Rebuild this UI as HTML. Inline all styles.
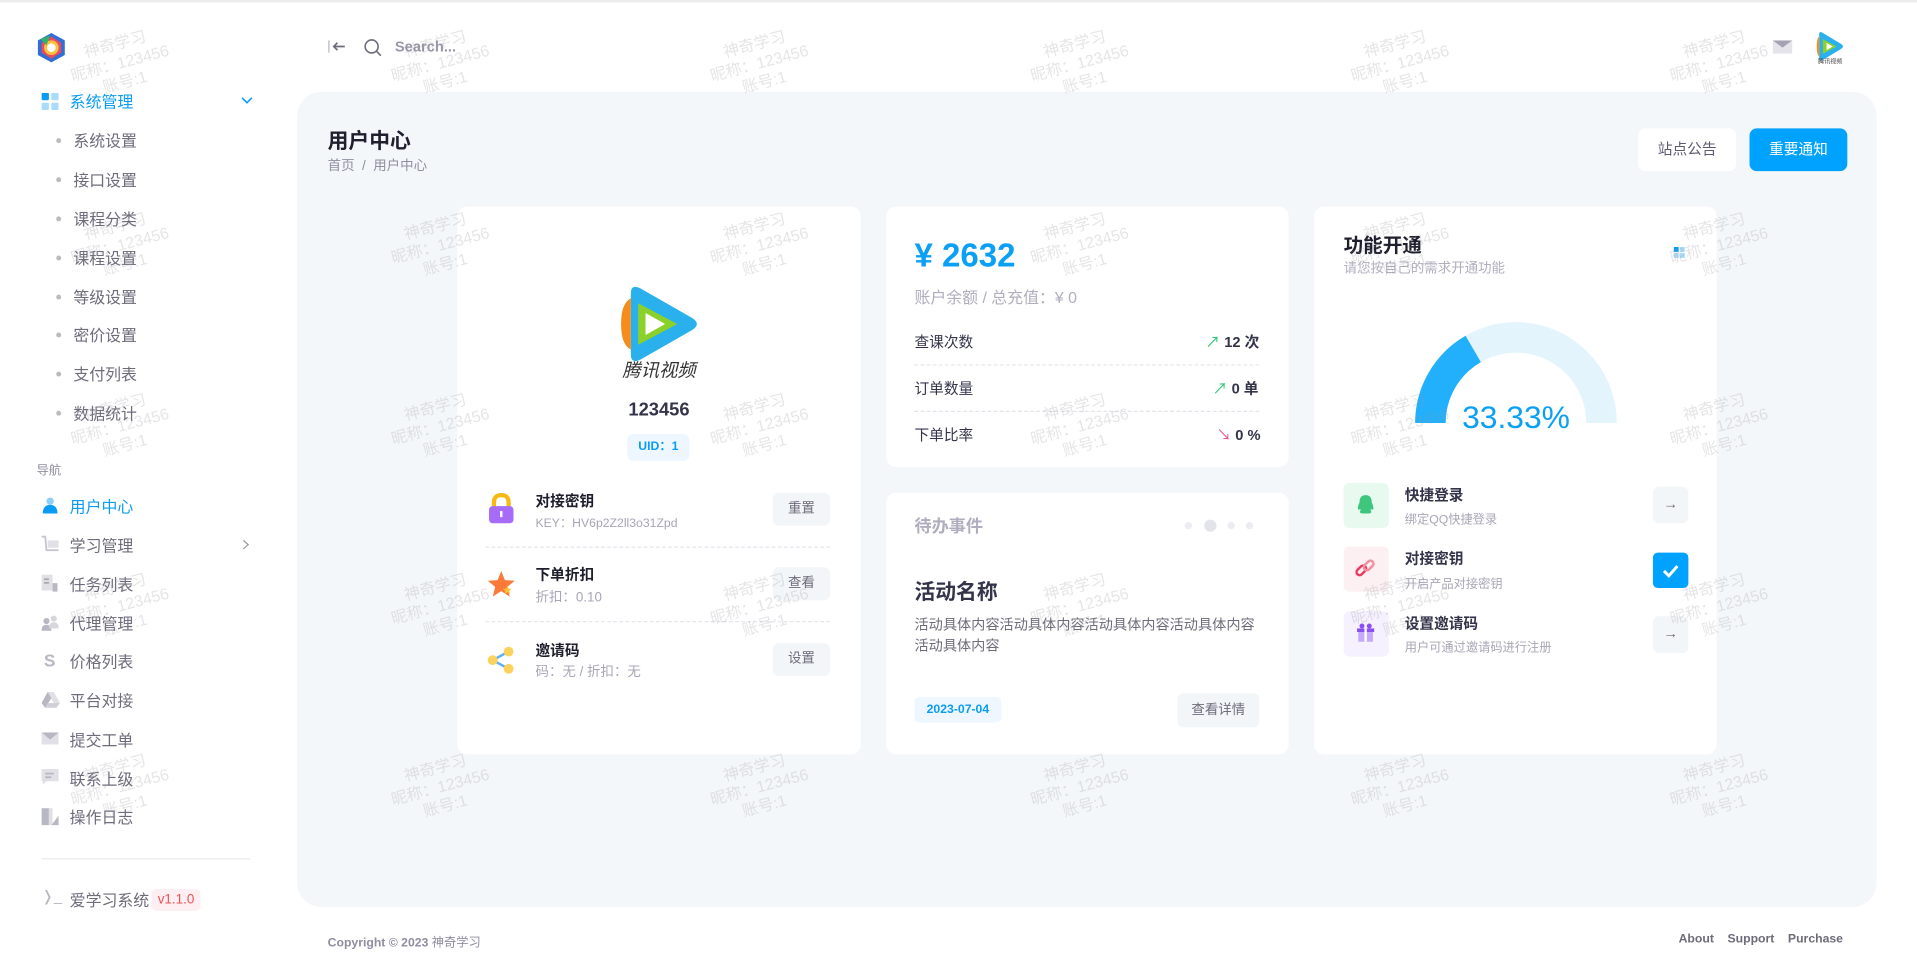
<!DOCTYPE html>
<html><head><meta charset="utf-8">
<style>
*{box-sizing:border-box;margin:0;padding:0}
html,body{width:1917px;height:960px;overflow:hidden;background:#fff}
body{font-family:"Liberation Sans","Noto Sans CJK SC",sans-serif;color:#5e5873}
#w{position:absolute;left:0;top:0;width:1568px;height:785px;transform:scale(1.22258);transform-origin:0 0;background:#fff}
.a{position:absolute;white-space:nowrap}
.card{position:absolute;background:#fff;border-radius:8px}
.sub{font-size:13px;color:#6e6b7b}
.dot{position:absolute;width:4px;height:4px;border-radius:50%;background:#bbb}
.btn{position:absolute;background:#f3f6f9;border-radius:5px;font-size:11px;color:#6e6b7b;text-align:center}
.dash{position:absolute;border-top:1px dashed #e3e3ec;height:0}
.wm{position:absolute;color:rgba(150,150,160,.25);font-size:13px;text-align:center;line-height:16px;transform:rotate(-15deg);white-space:nowrap;pointer-events:none}
</style></head><body><div id="w">
<div class="a" style="left:0;top:0;width:1568px;height:2px;background:#ececec"></div>

<svg class="a" style="left:29px;top:26px" width="26" height="26" viewBox="0 0 26 26"><polygon points="13,1 24,7 24,19 13,25 2,19 2,7" fill="#2f6fd6"/><polygon points="13,4 21,9 21,17 13,22 5,17 5,9" fill="#e84a5f"/><circle cx="13" cy="13" r="6" fill="#f9c23c"/><circle cx="13" cy="13" r="3.5" fill="#fff"/><path d="M4 6 L12 3 L9 11Z" fill="#31b26b"/></svg>

<svg class="a" style="left:34px;top:76px" width="14" height="14"><rect x="0" y="0" width="6" height="6" rx="1" fill="#0a9cf5"/><rect x="8" y="0" width="6" height="6" rx="1" fill="#a9dbfb"/><rect x="0" y="8" width="6" height="6" rx="1" fill="#a9dbfb"/><rect x="8" y="8" width="6" height="6" rx="1" fill="#a9dbfb"/></svg>
<div class="a" style="left:57px;top:73px;font-size:13px;color:#0a9cf5">系统管理</div>
<svg class="a" style="left:197px;top:78px" width="10" height="8"><path d="M1 2 L5 6 L9 2" stroke="#0a9cf5" fill="none" stroke-width="1.3"/></svg>

<div class="dot" style="left:46px;top:113px"></div><div class="a sub" style="left:60px;top:105px">系统设置</div>
<div class="dot" style="left:46px;top:145px"></div><div class="a sub" style="left:60px;top:137px">接口设置</div>
<div class="dot" style="left:46px;top:177px"></div><div class="a sub" style="left:60px;top:169px">课程分类</div>
<div class="dot" style="left:46px;top:209px"></div><div class="a sub" style="left:60px;top:201px">课程设置</div>
<div class="dot" style="left:46px;top:241px"></div><div class="a sub" style="left:60px;top:233px">等级设置</div>
<div class="dot" style="left:46px;top:272px"></div><div class="a sub" style="left:60px;top:264px">密价设置</div>
<div class="dot" style="left:46px;top:304px"></div><div class="a sub" style="left:60px;top:296px">支付列表</div>
<div class="dot" style="left:46px;top:336px"></div><div class="a sub" style="left:60px;top:328px">数据统计</div>

<div class="a" style="left:30px;top:376px;font-size:10px;color:#8f8da0">导航</div>

<svg class="a" style="left:34px;top:406px" width="14" height="14"><circle cx="7" cy="4" r="3" fill="#8ccff9"/><path d="M1 14 Q1 7 7 7 Q13 7 13 14Z" fill="#0a9cf5"/></svg>
<div class="a" style="left:57px;top:404px;font-size:13px;color:#0a9cf5">用户中心</div>

<svg class="a" style="left:34px;top:438px" width="14" height="14"><path d="M0 1 L3 1 L4 12 L14 12" stroke="#c6c6cf" fill="none" stroke-width="1.5"/><rect x="5" y="4" width="9" height="6" fill="#e0e0e6"/></svg>
<div class="a sub" style="left:57px;top:436px">学习管理</div>
<svg class="a" style="left:198px;top:441px" width="6" height="9"><path d="M1 1 L5 4.5 L1 8" stroke="#999" fill="none"/></svg>

<svg class="a" style="left:34px;top:470px" width="14" height="14"><rect x="0" y="0" width="9" height="13" fill="#e0e0e6"/><rect x="9" y="7" width="4" height="7" fill="#b8b8c2"/><rect x="2" y="3" width="4" height="1.5" fill="#aaa"/><rect x="2" y="6" width="4" height="1.5" fill="#aaa"/></svg>
<div class="a sub" style="left:57px;top:468px">任务列表</div>

<svg class="a" style="left:34px;top:502px" width="14" height="14"><circle cx="4" cy="6" r="2.5" fill="#b8b8c2"/><circle cx="10" cy="4" r="2.5" fill="#d6d6dd"/><path d="M0 14 Q0 9 4 9 Q8 9 8 14Z" fill="#b8b8c2"/><path d="M6 12 Q6 7 10 7 Q14 7 14 12Z" fill="#d6d6dd"/></svg>
<div class="a sub" style="left:57px;top:500px">代理管理</div>

<div class="a" style="left:36px;top:532px;font-size:14px;color:#b8b8c2;font-weight:bold">S</div>
<div class="a sub" style="left:57px;top:531px">价格列表</div>

<svg class="a" style="left:34px;top:566px" width="15" height="13"><path d="M5 0 L10 0 L15 9 L12 13Z" fill="#e0e0e6"/><path d="M5 0 L0 9 L3 13 L8 5Z" fill="#b8b8c2"/><path d="M3 13 L12 13 L15 9 L5 9Z" fill="#d0d0d8"/></svg>
<div class="a sub" style="left:57px;top:563px">平台对接</div>

<svg class="a" style="left:34px;top:599px" width="14" height="10"><rect width="14" height="10" fill="#e0e0e6"/><path d="M0 0 L7 6 L14 0Z" fill="#b8b8c2"/></svg>
<div class="a sub" style="left:57px;top:595px">提交工单</div>

<svg class="a" style="left:34px;top:629px" width="14" height="14"><path d="M0 0 H14 V10 H4 L1 13 V10 H0Z" fill="#e0e0e6"/><rect x="3" y="3" width="7" height="1.5" fill="#b8b8c2"/><rect x="3" y="6" width="5" height="1.5" fill="#b8b8c2"/></svg>
<div class="a sub" style="left:57px;top:627px">联系上级</div>

<svg class="a" style="left:34px;top:661px" width="14" height="14"><rect x="0" y="0" width="6" height="14" fill="#b8b8c2"/><rect x="6" y="0" width="3" height="14" fill="#e0e0e6"/><path d="M8 14 L14 6 L14 14Z" fill="#b8b8c2"/></svg>
<div class="a sub" style="left:57px;top:658px">操作日志</div>

<div class="a" style="left:34px;top:702px;width:171px;height:1px;background:#ebe9f1"></div>
<div class="a" style="left:34px;top:726px;font-size:12px;color:#b8b8c2">&#x276D;_</div>
<div class="a sub" style="left:57px;top:726px">爱学习系统</div>
<div class="a" style="left:124px;top:727px;padding:2px 5px;background:#fdeef1;color:#ea5455;font-size:11px;border-radius:4px;line-height:14px">v1.1.0</div>

<svg class="a" style="left:268px;top:32px" width="16" height="12"><line x1="1" y1="1" x2="1" y2="11" stroke="#c6c6cf" stroke-width="1.3"/><path d="M14 6 H5 M8 3 L5 6 L8 9" stroke="#6e6b7b" fill="none" stroke-width="1.4"/></svg>
<svg class="a" style="left:297px;top:31px" width="16" height="16"><circle cx="7" cy="7" r="5.3" stroke="#6e6b7b" fill="none" stroke-width="1.3"/><line x1="11" y1="11" x2="14.5" y2="14.5" stroke="#6e6b7b" stroke-width="1.3"/></svg>
<div class="a" style="left:323px;top:31px;font-size:12px;color:#9896a8;font-weight:bold">Search...</div>
<svg class="a" style="left:1450px;top:33px" width="16" height="11"><rect width="16" height="11" fill="#e4e4ea"/><path d="M0 0 L8 6 L16 0Z" fill="#a5a3b3"/></svg>
<svg class="a" style="left:1484px;top:25px" width="26" height="28" viewBox="0 0 26 28"><path d="M4 3 Q4 0 7 2 L22 11 Q25 13 22 15 L7 24 Q4 26 4 23Z" fill="#2bb0ee"/><path d="M4 5 L4 21 Q2 20 2 13 Q2 6 4 5Z" fill="#f58c1c"/><path d="M7 7 L18 13 L7 19Z" fill="#8cd12a"/><path d="M10 10 L15 13 L10 16Z" fill="#fff"/><text x="13" y="27" font-size="5" text-anchor="middle" fill="#444" font-family="Noto Sans CJK SC,sans-serif">腾讯视频</text></svg>

<div class="a" style="left:243px;top:75px;width:1292px;height:667px;background:#f4f7fa;border-radius:20px"></div>
<div class="a" style="left:268px;top:101px;font-size:17px;font-weight:bold;color:#1e1e2d">用户中心</div>
<div class="a" style="left:268px;top:127px;font-size:11px;color:#8f8da0">首页 &nbsp;/&nbsp; 用户中心</div>
<div class="a" style="left:1340px;top:105px;width:80px;height:35px;background:#fff;border-radius:6px;font-size:12px;color:#5e5873;text-align:center;line-height:35px">站点公告</div>
<div class="a" style="left:1431px;top:105px;width:80px;height:35px;background:#00a2ff;border-radius:6px;font-size:12px;color:#fff;text-align:center;line-height:35px">重要通知</div>

<div class="card" style="left:374px;top:169px;width:330px;height:448px"></div>
<svg class="a" style="left:504px;top:232px" width="70" height="80" viewBox="0 0 70 80"><path d="M12 8 Q12 0 20 4 L62 28 Q70 33 62 38 L20 62 Q12 66 12 58Z" fill="#2bb0ee"/><path d="M12 12 L12 54 Q4 50 4 33 Q4 16 12 12Z" fill="#f58c1c"/><path d="M18 16 L50 33 L18 50Z" fill="#8cd12a"/><path d="M24 24 L40 33 L24 42Z" fill="#fff"/><text x="35" y="76" font-size="15" text-anchor="middle" fill="#333" font-style="italic" font-family="Noto Sans CJK SC,sans-serif">腾讯视频</text></svg>
<div class="a" style="left:504px;top:327px;width:70px;text-align:center;font-size:15px;font-weight:bold;color:#33334a">123456</div>
<div class="a" style="left:513px;top:355px;width:51px;height:22px;background:#eef7ff;border-radius:5px;color:#0a9cf5;font-size:10px;text-align:center;line-height:22px;font-weight:bold">UID：1</div>

<svg class="a" style="left:398px;top:403px" width="24" height="26"><path d="M6 12 V8 Q6 2 12 2 Q18 2 18 8 V12" stroke="#f9b815" stroke-width="3.5" fill="none"/><rect x="2" y="11" width="20" height="14" rx="3" fill="#a66cf7"/><rect x="11" y="15" width="2" height="5" fill="#fff"/></svg>
<div class="a" style="left:438px;top:401px;font-size:12px;font-weight:bold;color:#1e1e2d">对接密钥</div>
<div class="a" style="left:438px;top:419px;font-size:10px;color:#a8a6b6">KEY：HV6p2Z2ll3o31Zpd</div>
<div class="btn" style="left:632px;top:403px;width:47px;height:27px;line-height:27px">重置</div>
<div class="dash" style="left:397px;top:447px;width:282px"></div>

<svg class="a" style="left:398px;top:466px" width="24" height="24"><path d="M12 1 L15 8.5 L23 9 L17 14 L19 22 L12 17.5 L5 22 L7 14 L1 9 L9 8.5Z" fill="#fb7a3a"/><path d="M17 13 L18 15.5 L20.5 15.7 L18.6 17.3 L19.2 19.8 L17 18.4 L14.8 19.8 L15.4 17.3 L13.5 15.7 L16 15.5Z" fill="#fbc43a"/></svg>
<div class="a" style="left:438px;top:461px;font-size:12px;font-weight:bold;color:#1e1e2d">下单折扣</div>
<div class="a" style="left:438px;top:480px;font-size:11px;color:#a8a6b6">折扣：0.10</div>
<div class="btn" style="left:632px;top:464px;width:47px;height:27px;line-height:27px">查看</div>
<div class="dash" style="left:397px;top:508px;width:282px"></div>

<svg class="a" style="left:398px;top:528px" width="24" height="24"><line x1="5" y1="12" x2="18" y2="5" stroke="#5ab1f5" stroke-width="2"/><line x1="5" y1="12" x2="18" y2="19" stroke="#5ab1f5" stroke-width="2"/><circle cx="5" cy="12" r="4" fill="#fbd35c"/><circle cx="18" cy="5" r="4" fill="#fbd35c"/><circle cx="18" cy="19" r="4" fill="#fbd35c"/></svg>
<div class="a" style="left:438px;top:523px;font-size:12px;font-weight:bold;color:#1e1e2d">邀请码</div>
<div class="a" style="left:438px;top:541px;font-size:11px;color:#a8a6b6">码：无 / 折扣：无</div>
<div class="btn" style="left:632px;top:526px;width:47px;height:27px;line-height:27px">设置</div>

<div class="card" style="left:725px;top:169px;width:329px;height:213px"></div>
<div class="a" style="left:748px;top:194px;font-size:27px;font-weight:bold;color:#0aa0f5">¥ 2632</div>
<div class="a" style="left:748px;top:233px;font-size:13px;color:#b0aebe">账户余额 / 总充值：¥ 0</div>
<div class="a" style="left:748px;top:271px;font-size:12px;color:#33334a">查课次数</div>
<div class="a" style="left:986px;top:271px;font-size:12px;color:#33334a;font-weight:bold"><span style="color:#28c76f;font-weight:normal">&#x2197;</span> 12 次</div>
<div class="dash" style="left:748px;top:298px;width:282px"></div>
<div class="a" style="left:748px;top:309px;font-size:12px;color:#33334a">订单数量</div>
<div class="a" style="left:992px;top:309px;font-size:12px;color:#33334a;font-weight:bold"><span style="color:#28c76f;font-weight:normal">&#x2197;</span> 0 单</div>
<div class="dash" style="left:748px;top:336px;width:282px"></div>
<div class="a" style="left:748px;top:347px;font-size:12px;color:#33334a">下单比率</div>
<div class="a" style="left:995px;top:347px;font-size:12px;color:#33334a;font-weight:bold"><span style="color:#ea5485;font-weight:normal">&#x2198;</span> 0 %</div>

<div class="card" style="left:725px;top:403px;width:329px;height:214px"></div>
<div class="a" style="left:748px;top:420px;font-size:14px;color:#b0aebe;font-weight:bold">待办事件</div>
<div class="a" style="left:969px;top:427px;width:6px;height:6px;border-radius:50%;background:#ececf2"></div>
<div class="a" style="left:985px;top:425px;width:10px;height:10px;border-radius:50%;background:#e3e3ea"></div>
<div class="a" style="left:1004px;top:427px;width:6px;height:6px;border-radius:50%;background:#ececf2"></div>
<div class="a" style="left:1019px;top:427px;width:6px;height:6px;border-radius:50%;background:#ececf2"></div>
<div class="a" style="left:748px;top:470px;font-size:17px;font-weight:bold;color:#33334a">活动名称</div>
<div class="a" style="left:748px;top:503px;font-size:11.6px;color:#6e6b7b;line-height:17px">活动具体内容活动具体内容活动具体内容活动具体内容<br>活动具体内容</div>
<div class="a" style="left:748px;top:570px;width:71px;height:21px;background:#eef7ff;border-radius:4px;color:#0a9cf5;font-size:10px;font-weight:bold;text-align:center;line-height:21px">2023-07-04</div>
<div class="btn" style="left:963px;top:567px;width:67px;height:28px;line-height:28px">查看详情</div>

<div class="card" style="left:1075px;top:169px;width:329px;height:448px"></div>
<div class="a" style="left:1099px;top:187px;font-size:16px;font-weight:bold;color:#1e1e2d">功能开通</div>
<div class="a" style="left:1099px;top:211px;font-size:11px;color:#b0aebe">请您按自己的需求开通功能</div>
<svg class="a" style="left:1369px;top:202px" width="10" height="10"><rect x="0" y="0" width="4" height="4" fill="#0a9cf5"/><rect x="5" y="0" width="4" height="4" fill="#a9dbfb"/><rect x="0" y="5" width="4" height="4" fill="#a9dbfb"/><rect x="5" y="5" width="4" height="4" fill="#a9dbfb"/></svg>
<svg class="a" style="left:1150px;top:256px" width="180" height="92"><path d="M20 90 A70 70 0 0 1 160 90" stroke="#e3f4fd" stroke-width="25" fill="none"/><path d="M20 90 A70 70 0 0 1 55 29.4" stroke="#22b0fc" stroke-width="25" fill="none"/></svg>
<div class="a" style="left:1160px;top:326px;width:160px;text-align:center;font-size:26px;color:#0aa0f5">33.33%</div>

<div class="a" style="left:1099px;top:395px;width:37px;height:37px;border-radius:5px;background:#e8faf0"></div>
<svg class="a" style="left:1109px;top:404px" width="16" height="17"><path d="M8 1 Q3 1 3 7 Q1 11 2 13 Q4 12 4 13 Q2 16 6 16 H10 Q14 16 12 13 Q12 12 14 13 Q15 11 13 7 Q13 1 8 1Z" fill="#3fc67d"/></svg>
<div class="a" style="left:1149px;top:396px;font-size:12px;font-weight:bold;color:#33334a">快捷登录</div>
<div class="a" style="left:1149px;top:416px;font-size:10px;color:#a8a6b6">绑定QQ快捷登录</div>
<div class="btn" style="left:1352px;top:398px;width:29px;height:30px;line-height:29px;font-size:12px">&#x2192;</div>

<div class="a" style="left:1099px;top:447px;width:37px;height:37px;border-radius:5px;background:#fdf0f3"></div>
<svg class="a" style="left:1108px;top:456px" width="18" height="18"><rect x="1" y="8" width="9" height="5" rx="2.5" transform="rotate(-45 5.5 10.5)" stroke="#ea3b5c" stroke-width="2" fill="none"/><rect x="7" y="4" width="9" height="5" rx="2.5" transform="rotate(-45 11.5 6.5)" stroke="#f28ea0" stroke-width="2" fill="none"/></svg>
<div class="a" style="left:1149px;top:448px;font-size:12px;font-weight:bold;color:#33334a">对接密钥</div>
<div class="a" style="left:1149px;top:469px;font-size:10px;color:#a8a6b6">开启产品对接密钥</div>
<div class="a" style="left:1352px;top:452px;width:29px;height:29px;border-radius:4px;background:#00a2ff"></div>
<svg class="a" style="left:1359px;top:459px" width="15" height="15"><path d="M2 8 L6 12 L13 4" stroke="#fff" stroke-width="2.4" fill="none"/></svg>

<div class="a" style="left:1099px;top:500px;width:37px;height:37px;border-radius:5px;background:#f5f1fe"></div>
<svg class="a" style="left:1109px;top:509px" width="16" height="16"><rect x="1" y="5" width="14" height="3" fill="#8a4ff5"/><rect x="2" y="8" width="12" height="8" fill="#c6a9fb"/><rect x="7" y="5" width="2" height="11" fill="#fff"/><circle cx="5" cy="3" r="2" fill="#8a4ff5"/><circle cx="11" cy="3" r="2" fill="#8a4ff5"/></svg>
<div class="a" style="left:1149px;top:501px;font-size:12px;font-weight:bold;color:#33334a">设置邀请码</div>
<div class="a" style="left:1149px;top:521px;font-size:10px;color:#a8a6b6">用户可通过邀请码进行注册</div>
<div class="btn" style="left:1352px;top:504px;width:29px;height:30px;line-height:29px;font-size:12px">&#x2192;</div>

<div class="a" style="left:268px;top:762px;font-size:10px;color:#8f8da0;font-weight:bold">Copyright © 2023 <span style="font-weight:normal">神奇学习</span></div>
<div class="a" style="left:1373px;top:763px;font-size:10px;color:#6e6b7b;font-weight:bold">About &nbsp;&nbsp; Support &nbsp;&nbsp; Purchase</div>

<div class="wm" style="left:57px;top:28px">神奇学习<br>昵称：123456<br>账号:1</div>
<div class="wm" style="left:319px;top:28px">神奇学习<br>昵称：123456<br>账号:1</div>
<div class="wm" style="left:580px;top:28px">神奇学习<br>昵称：123456<br>账号:1</div>
<div class="wm" style="left:842px;top:28px">神奇学习<br>昵称：123456<br>账号:1</div>
<div class="wm" style="left:1104px;top:28px">神奇学习<br>昵称：123456<br>账号:1</div>
<div class="wm" style="left:1365px;top:28px">神奇学习<br>昵称：123456<br>账号:1</div>
<div class="wm" style="left:57px;top:177px">神奇学习<br>昵称：123456<br>账号:1</div>
<div class="wm" style="left:319px;top:177px">神奇学习<br>昵称：123456<br>账号:1</div>
<div class="wm" style="left:580px;top:177px">神奇学习<br>昵称：123456<br>账号:1</div>
<div class="wm" style="left:842px;top:177px">神奇学习<br>昵称：123456<br>账号:1</div>
<div class="wm" style="left:1104px;top:177px">神奇学习<br>昵称：123456<br>账号:1</div>
<div class="wm" style="left:1365px;top:177px">神奇学习<br>昵称：123456<br>账号:1</div>
<div class="wm" style="left:57px;top:325px">神奇学习<br>昵称：123456<br>账号:1</div>
<div class="wm" style="left:319px;top:325px">神奇学习<br>昵称：123456<br>账号:1</div>
<div class="wm" style="left:580px;top:325px">神奇学习<br>昵称：123456<br>账号:1</div>
<div class="wm" style="left:842px;top:325px">神奇学习<br>昵称：123456<br>账号:1</div>
<div class="wm" style="left:1104px;top:325px">神奇学习<br>昵称：123456<br>账号:1</div>
<div class="wm" style="left:1365px;top:325px">神奇学习<br>昵称：123456<br>账号:1</div>
<div class="wm" style="left:57px;top:472px">神奇学习<br>昵称：123456<br>账号:1</div>
<div class="wm" style="left:319px;top:472px">神奇学习<br>昵称：123456<br>账号:1</div>
<div class="wm" style="left:580px;top:472px">神奇学习<br>昵称：123456<br>账号:1</div>
<div class="wm" style="left:842px;top:472px">神奇学习<br>昵称：123456<br>账号:1</div>
<div class="wm" style="left:1104px;top:472px">神奇学习<br>昵称：123456<br>账号:1</div>
<div class="wm" style="left:1365px;top:472px">神奇学习<br>昵称：123456<br>账号:1</div>
<div class="wm" style="left:57px;top:620px">神奇学习<br>昵称：123456<br>账号:1</div>
<div class="wm" style="left:319px;top:620px">神奇学习<br>昵称：123456<br>账号:1</div>
<div class="wm" style="left:580px;top:620px">神奇学习<br>昵称：123456<br>账号:1</div>
<div class="wm" style="left:842px;top:620px">神奇学习<br>昵称：123456<br>账号:1</div>
<div class="wm" style="left:1104px;top:620px">神奇学习<br>昵称：123456<br>账号:1</div>
<div class="wm" style="left:1365px;top:620px">神奇学习<br>昵称：123456<br>账号:1</div>
</div></body></html>
